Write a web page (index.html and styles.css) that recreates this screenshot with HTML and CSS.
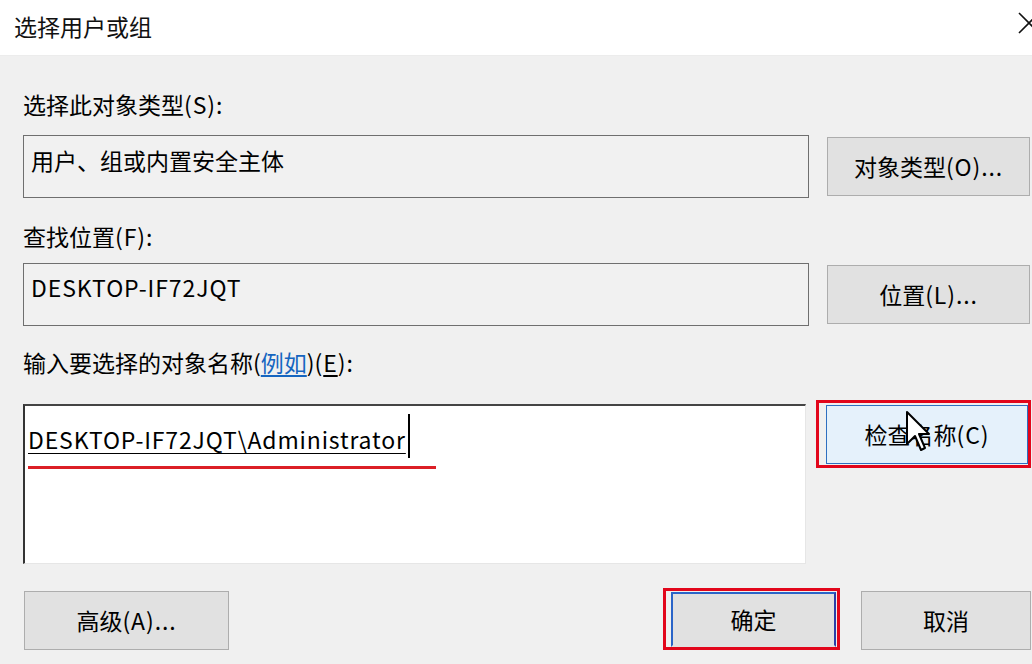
FILE: index.html
```html
<!DOCTYPE html>
<html lang="zh-CN">
<head>
<meta charset="utf-8">
<title>选择用户或组</title>
<link rel="stylesheet" href="styles.css">
</head>
<body>
<div class="dialog">
  <div class="titlebar">
    <span class="title">选择用户或组</span>
    <svg class="close" width="22" height="22" viewBox="0 0 22 22"><path d="M1 1 L21 21 M21 1 L1 21" stroke="#111" stroke-width="1.6" fill="none"/></svg>
  </div>
  <div class="main">
    <div class="label l1">选择此对象类型<span class="lat">(S):</span></div>
    <div class="row r1">
      <div class="field f1">用户、组或内置安全主体</div>
      <div class="btn">对象类型<span class="lat">(O)...</span></div>
    </div>
    <div class="label l2">查找位置<span class="lat">(F):</span></div>
    <div class="row r2">
      <div class="field f2"><span class="lat">DESKTOP-IF72JQT</span></div>
      <div class="btn">位置<span class="lat">(L)...</span></div>
    </div>
    <div class="label l3">输入要选择的对象名称(<span class="link">例如</span>)<span class="lat">(<span class="ak">E</span>):</span></div>
    <div class="row r3">
      <div class="textarea">
        <div class="entry"><span class="typed">DESKTOP-IF72JQT\Administrator</span><span class="caret"></span></div>
        <div class="redline"></div>
      </div>
      <div class="mark mark-check">
        <div class="btn btn-hover">检查名称<span class="lat">(C)</span>
          <svg class="pointer" width="26" height="42" viewBox="0 0 13 21"><path d="M1 1 L1 17 L5 13 L8 20 L10 19 L7 12 L12 12 Z" fill="#fff" stroke="#000" stroke-width="1" stroke-linejoin="round"/></svg>
        </div>
      </div>
    </div>
    <div class="row bottom">
      <div class="btn btn-adv">高级<span class="lat">(A)...</span></div>
      <div class="mark mark-ok">
        <div class="btn btn-ok">确定</div>
      </div>
      <div class="btn btn-cancel">取消</div>
    </div>
  </div>
</div>
</body>
</html>
```
FILE: styles.css
```css
html, body {
  margin: 0;
  padding: 0;
}
body {
  width: 1032px;
  height: 664px;
  overflow: hidden;
  font-family: "Noto Sans CJK SC", "Noto Sans", sans-serif;
  color: #000;
  background: #f0f0f0;
}
.dialog {
  width: 1032px;
  height: 664px;
  display: flex;
  flex-direction: column;
}
.titlebar {
  height: 56px;
  flex: none;
  background: #fff;
  display: flex;
  align-items: center;
  padding-left: 14px;
  box-sizing: border-box;
  overflow: hidden;
  border-bottom: 1px solid #ececec;
}
.title {
  font-size: 23px;
  line-height: 30px;
  margin-top: -3px;
  color: #111;
}
.close {
  margin-left: auto;
  margin-right: -8px;
  margin-top: -10px;
  flex: none;
}
.main {
  flex: 1;
  background: #f0f0f0;
  padding-left: 23px;
}
.lat {
  letter-spacing: 0.9px;
}
.label {
  font-size: 23px;
  line-height: 30px;
  height: 30px;
}
.l1 { margin-top: 33px; }
.l2 { margin-top: 23px; }
.l3 { margin-top: 21px; }
.row {
  display: flex;
  align-items: center;
}
.r1 { margin-top: 16px; }
.r2 { margin-top: 12px; }
.field {
  width: 786px;
  height: 63px;
  box-sizing: border-box;
  border: 1px solid #6f6f6f;
  background: #f1f1f1;
  font-size: 23px;
  line-height: 30px;
  padding: 9px 7px 0;
}
.f2 { padding-top: 8px; }
.btn {
  box-sizing: border-box;
  width: 203px;
  height: 59px;
  margin-left: 18px;
  background: #e1e1e1;
  border: 1px solid #adadad;
  font-size: 23px;
  display: flex;
  align-items: center;
  justify-content: center;
  padding-bottom: 2px;
}
.r3 {
  margin-top: 23px;
  align-items: flex-start;
}
.textarea {
  width: 783px;
  height: 160px;
  margin-top: 4px;
  box-sizing: border-box;
  background: #fff;
  border-top: 2px solid #444;
  border-left: 2px solid #333;
  border-right: 1px solid #e6e6e6;
  border-bottom: 1px solid #e6e6e6;
  padding: 16px 0 0 3px;
}
.entry {
  font-size: 23px;
  line-height: 34px;
  height: 34px;
  display: flex;
  align-items: center;
}
.typed {
  text-decoration: underline;
  text-decoration-thickness: 1px;
  text-underline-offset: 4px;
  letter-spacing: 0.85px;
}
.caret {
  display: inline-block;
  width: 2px;
  height: 44px;
  background: #000;
  margin-left: 2px;
  margin-top: -6px;
}
.redline {
  width: 408px;
  height: 3px;
  background: #dc1f26;
  margin-top: 10px;
}
.mark {
  border: 3px solid #e2061b;
  box-sizing: border-box;
}
.mark-check {
  margin-left: 10px;
  width: 215px;
  height: 68px;
  padding: 2px 0 0 7px;
}
.btn-hover {
  margin-left: 0;
  width: 202px;
  height: 59px;
  background: #e5f1fb;
  border: 1px solid #2f6fc0;
  position: relative;
}
.pointer {
  position: absolute;
  left: 78px;
  top: 4px;
}
.bottom {
  margin-top: 24px;
  align-items: flex-start;
}
.btn-adv {
  margin-left: 1px;
  margin-top: 3px;
  width: 205px;
}
.mark-ok {
  margin-left: auto;
  width: 177px;
  height: 62px;
  padding: 1px 1px 0 5px;
}
.btn-ok {
  margin-left: 0;
  width: 165px;
  height: 55px;
  border: 2px solid #2a64c8;
  border-right-color: #2a3fa8;
  border-bottom-color: #e1e1e1;
}
.btn-cancel {
  margin-left: 21px;
  margin-right: 1px;
  margin-top: 3px;
  width: 170px;
}
.link {
  color: #1565c0;
  text-decoration: underline;
  text-underline-offset: 3px;
}
.ak {
  text-decoration: underline;
  text-underline-offset: 3px;
}
```
